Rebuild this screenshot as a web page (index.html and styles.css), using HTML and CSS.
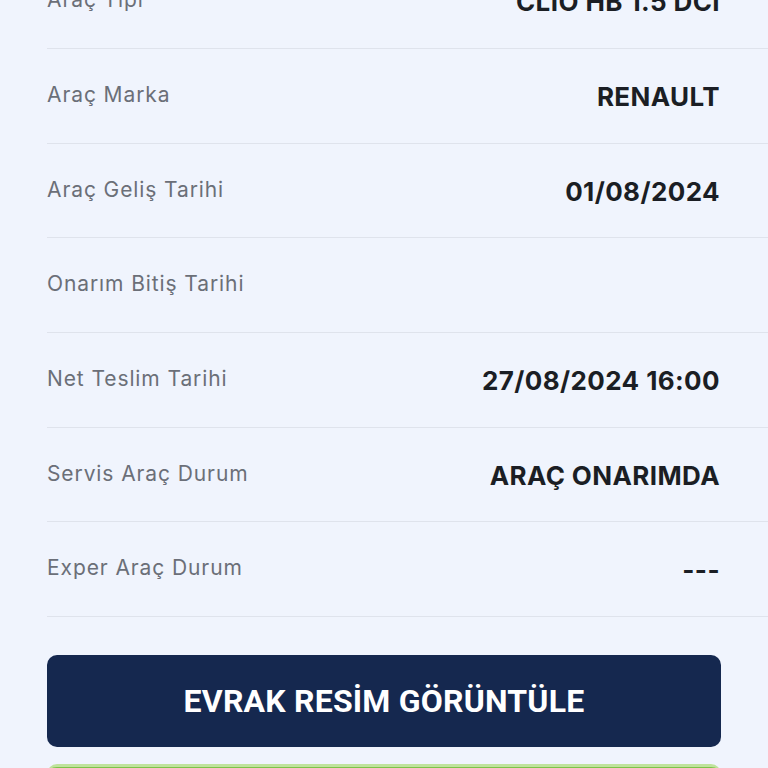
FILE: index.html
```html
<!DOCTYPE html>
<html lang="tr">
<head>
    <meta charset="UTF-8">
    <meta name="viewport" content="width=device-width, initial-scale=1.0">
    <title>Araç Detay</title>
    <link rel="stylesheet" href="styles.css">
</head>
<body>
    <div class="detail-list">
        <div class="row">
            <span class="label">Araç Tipi</span>
            <span class="value">CLIO HB 1.5 DCI</span>
        </div>
        <div class="row">
            <span class="label">Araç Marka</span>
            <span class="value">RENAULT</span>
        </div>
        <div class="row">
            <span class="label">Araç Geliş Tarihi</span>
            <span class="value">01/08/2024</span>
        </div>
        <div class="row">
            <span class="label">Onarım Bitiş Tarihi</span>
            <span class="value"></span>
        </div>
        <div class="row">
            <span class="label">Net Teslim Tarihi</span>
            <span class="value">27/08/2024 16:00</span>
        </div>
        <div class="row">
            <span class="label">Servis Araç Durum</span>
            <span class="value">ARAÇ ONARIMDA</span>
        </div>
        <div class="row">
            <span class="label">Exper Araç Durum</span>
            <span class="value">---</span>
        </div>
    </div>

    <div class="actions">
        <button class="btn btn-dark">EVRAK RESİM GÖRÜNTÜLE</button>
        <button class="btn btn-green"></button>
    </div>
</body>
</html>
```

FILE: styles.css
```css
body {
    margin: 0;
    padding: 0;
    background-color: #f0f4fd;
    font-family: Inter, "Noto Sans", sans-serif;
    overflow: hidden;
}
.detail-list {
    margin-top: -45.7px;
    padding-left: 47px;
}
.row {
    height: 93.7px;
    border-bottom: 1px solid #dfe3ec;
    display: flex;
    align-items: center;
    justify-content: space-between;
    padding-right: 48px;
}
.label {
    font-size: 21px;
    color: #6b6f78;
    letter-spacing: 0.9px;
    margin-top: -3px;
}
.value {
    font-size: 26px;
    font-weight: 700;
    color: #1b1e24;
    letter-spacing: 0.4px;
    margin-top: 1px;
}
.actions {
    padding: 38px 47px 0 47px;
    display: flex;
    flex-direction: column;
    gap: 17px;
}
.btn {
    width: 100%;
    border: none;
    border-radius: 10px;
    cursor: pointer;
}
.btn-dark {
    height: 92px;
    background-color: #15284f;
    color: white;
    font-family: Roboto, sans-serif;
    font-weight: 700;
    font-size: 32px;
    letter-spacing: 0.2px;
}
.btn-green {
    height: 92px;
    background-color: #7cc24a;
    border-top: 3px solid #bfe39c;
}
```
